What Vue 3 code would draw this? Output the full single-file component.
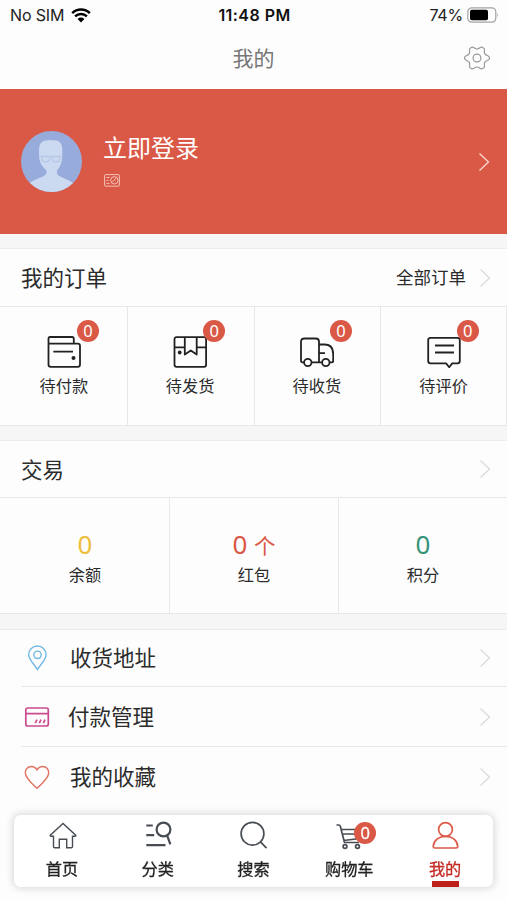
<script setup>
import { ref } from 'vue'

const orders = [
  { id: 'pay', label: '待付款', count: 0 },
  { id: 'ship', label: '待发货', count: 0 },
  { id: 'receive', label: '待收货', count: 0 },
  { id: 'review', label: '待评价', count: 0 },
]

const assets = [
  { label: '余额', value: 0, tone: 'yellow' },
  { label: '红包', value: 0, unit: '个', tone: 'red' },
  { label: '积分', value: 0, tone: 'green' },
]

const links = [
  { id: 'address', label: '收货地址' },
  { id: 'payment', label: '付款管理' },
  { id: 'favorite', label: '我的收藏' },
]

const tabs = [
  { id: 'home', label: '首页' },
  { id: 'category', label: '分类' },
  { id: 'search', label: '搜索' },
  { id: 'cart', label: '购物车', count: 0 },
  { id: 'mine', label: '我的' },
]

const activeTab = ref('mine')
</script>

<template>
  <div class="page">
    <div class="status">
      <div class="status-side">
        <span class="carrier">No SIM</span>
        <svg class="wifi" width="20" height="15" viewBox="0 0 20 15">
          <path d="M1.2 5.2a12.6 12.6 0 0 1 17.6 0M4.1 8.4a8.4 8.4 0 0 1 11.8 0" fill="none" stroke="#000" stroke-width="2.5" />
          <path d="M10 14.5 6.6 11a4.8 4.8 0 0 1 6.8 0z" />
        </svg>
      </div>
      <span class="clock">11:48 PM</span>
      <div class="status-side status-side--right">
        <span class="percent">74%</span>
        <svg width="33" height="16" viewBox="0 0 33 16">
          <rect x="1.8" y=".8" width="28" height="14.4" rx="4" fill="none" stroke="#a2a2a2" stroke-width="1.2" />
          <rect x="4" y="2.8" width="18" height="10.4" rx="1.8" />
          <path d="M31.3 5.5q1.6 2.5 0 5z" fill="#a2a2a2" />
        </svg>
      </div>
    </div>

    <header class="nav">
      <h1>我的</h1>
      <svg class="gear" width="26" height="26" viewBox="0 0 26 26" fill="none" stroke="#999" stroke-width="1.2">
        <path d="M8.300 2.100C9.700 1.600 10.300 4 13 4s3.300-2.400 4.700-1.900l2.500 1.500c1.100 1-.6 2.900.5 5 1.200 2.100 4.300 1.900 4.700 3.700v1.400c-.4 1.800-3.500 1.600-4.700 3.700-1.100 2.100.6 4-.5 5l-2.500 1.500c-1.400.5-2-1.900-4.700-1.900s-3.300 2.400-4.700 1.900l-2.500-1.500c-1.100-1 .6-2.900-.5-5C4.100 15.300 1 15.500.6 13.700v-1.400c.4-1.800 3.500-1.600 4.700-3.700 1.100-2.100-.6-4 .5-5z" />
        <circle cx="13" cy="13" r="3.900" />
      </svg>
    </header>

    <section class="profile">
      <svg class="avatar" width="61" height="61" viewBox="0 0 61 61">
        <defs>
          <clipPath id="avatar-clip"><circle cx="30.5" cy="30.5" r="30.5" /></clipPath>
        </defs>
        <g clip-path="url(#avatar-clip)">
          <rect width="61" height="61" fill="#98acdc" />
          <path d="M18 25V18Q18 9.200 27 9.200h5.500Q41.300 9.200 41.300 18v7c0 6-2 10.500-5.300 14.500v3c3 5 12 5 18 11.500v7H7v-7c5-6.500 15-6.500 18.500-11.500v-3C21.500 36 18 31 18 25z" fill="#ccdaf1" />
          <path d="M18 25.500h23.500M20.500 26q0 5 4.300 5t4.200-5M31 26q0 5 4 5t4.200-5" fill="none" stroke="#b7c7e7" stroke-width="1.3" />
        </g>
      </svg>
      <div class="profile-text">
        <div class="login">立即登录</div>
        <svg class="card-tag" width="16" height="13" viewBox="0 0 16 13" fill="none" stroke="#f6c3b7" stroke-width="1">
          <rect x=".6" y=".6" width="14.800" height="11.600" rx="1.200" />
          <path d="M2.500 3.500h3M2.500 6.400h2M2.500 9.400h3M8.300 8.200l4.200-4.500" />
          <circle cx="10.400" cy="6.300" r="3.700" />
        </svg>
      </div>
      <svg class="chevron chevron--light" width="12" height="20" viewBox="0 0 12 20"><path d="M1.500 1.500 10.500 10 1.500 18.500" /></svg>
    </section>

    <section class="panel">
      <div class="panel-head">
        <h2>我的订单</h2>
        <span class="panel-more">全部订单</span>
        <svg class="chevron" width="12" height="20" viewBox="0 0 12 20"><path d="M1.500 1.500 10.500 10 1.500 18.500" /></svg>
      </div>
      <div class="orders">
        <div v-for="o in orders" :key="o.id" class="order">
          <div class="order-icon">
            <svg width="34" height="34" viewBox="0 0 34 34">
              <g v-if="o.id === 'pay'">
                <path d="M1.500 11V4.500Q1.500 3 3 3h22q1.800 0 1.800 1.800V9.500M1.500 9.700h29.200Q33 9.700 33 12v18.500q0 2.300-2.300 2.300H3.800Q1.500 32.800 1.500 30.500zM6.300 17.600H26" />
                <circle class="dot" cx="26.500" cy="24" r="2" />
              </g>
              <g v-else-if="o.id === 'ship'">
                <path d="M3.500 3.200h27.600q2 0 2 2v25.600q0 2-2 2H3.500q-2 0-2-2V5.200q0-2 2-2zM1.500 13.300h10.300M23.700 13.300H33M11.800 3.200v17.300l6-4 5.900 4V3.200" />
                <circle class="dot" cx="6.700" cy="18.500" r="1.900" />
              </g>
              <g v-else-if="o.id === 'receive'">
                <path d="M4 28.300H2.500q-1.500 0-1.500-1.500V8q0-3.500 3.500-3.500h11.200q3.300 0 3.300 3.300v20.500M11.600 28.300h10.300M19 10.500h5.500q8.700 0 8.700 9.500v6.800q0 1.500-1.500 1.500h-2M19.500 19.200H25" />
                <circle cx="7.800" cy="28.500" r="3.700" />
                <circle cx="25.800" cy="28.500" r="3.700" />
              </g>
              <g v-else>
                <path d="M3.500 3.800h27q2.300 0 2.300 2.300v21q0 2.300-2.300 2.300h-5.300l-3 3.800-3.100-3.800H3.500q-2.300 0-2.300-2.300v-21q0-2.300 2.300-2.300zM8 11.500h19M8 18.500h19" />
              </g>
            </svg>
            <span class="badge">{{ o.count }}</span>
          </div>
          <span class="order-label">{{ o.label }}</span>
        </div>
      </div>
    </section>

    <section class="panel panel--assets">
      <div class="panel-head">
        <h2>交易</h2>
        <svg class="chevron" width="12" height="20" viewBox="0 0 12 20"><path d="M1.500 1.500 10.500 10 1.500 18.500" /></svg>
      </div>
      <div class="assets">
        <div v-for="a in assets" :key="a.label" class="asset">
          <span class="asset-value" :class="`asset-value--${a.tone}`">
            {{ a.value }} <span v-if="a.unit" class="asset-unit">{{ a.unit }}</span>
          </span>
          <span class="asset-label">{{ a.label }}</span>
        </div>
      </div>
    </section>

    <section class="panel panel--list">
      <div v-for="l in links" :key="l.id" class="link" :class="`link--${l.id}`">
        <svg class="link-icon" width="26" height="26" viewBox="0 0 26 26">
          <g v-if="l.id === 'address'">
            <path d="M13.500 24.500C10 19 4.700 14.500 4.700 9.700a8.700 8.700 0 0 1 17.400 0c0 4.800-5.300 9.300-8.600 14.800z" />
            <circle cx="13.500" cy="9.800" r="3.700" />
          </g>
          <g v-else-if="l.id === 'payment'">
            <rect x="1.800" y="4" width="22.500" height="18" rx="2" />
            <path d="M2 9.700h22M11.300 19.200l1.700-3.600M15.300 19.200l1.700-3.600M19.300 19.200l1.700-3.600" />
          </g>
          <g v-else>
            <path d="M13 24.300C9 20.500 1.300 14.500 1.300 8.800 1.300 5 4 2.500 7.200 2.500c2.600 0 4.700 1.500 5.800 3.300 1.100-1.800 3.200-3.300 5.800-3.300 3.200 0 5.900 2.500 5.900 6.300 0 5.700-7.700 11.700-11.700 15.500z" />
          </g>
        </svg>
        <span class="link-label">{{ l.label }}</span>
        <svg class="chevron" width="12" height="20" viewBox="0 0 12 20"><path d="M1.500 1.500 10.500 10 1.500 18.500" /></svg>
      </div>
    </section>

    <nav class="tabbar">
      <div
        v-for="t in tabs"
        :key="t.id"
        class="tab"
        :class="{ 'tab--active': t.id === activeTab }"
        @click="activeTab = t.id"
      >
        <div class="tab-icon">
          <svg width="30" height="30" viewBox="0 0 30 30">
            <g v-if="t.id === 'home'" class="thin">
              <path d="M16 3.500 3.300 15.200q-.5 1 .7 1h2.500v10.300q0 1.200 1.200 1.200h4.600V19.200h7.400v8.500h4.600q1.200 0 1.200-1.200V16.200H28q1.200 0 .7-1z" />
            </g>
            <g v-else-if="t.id === 'category'" class="thick">
              <path d="M3.300 5.500h6.500M3.300 15.200h7.900M3.300 25.200h19.200M24.200 15.700l3.200 8.600" />
              <circle cx="20.500" cy="9.500" r="6.900" />
            </g>
            <g v-else-if="t.id === 'search'">
              <circle cx="14.500" cy="13.700" r="11.400" />
              <path d="M22.500 21.900l6 6.300" />
            </g>
            <g v-else-if="t.id === 'cart'">
              <path d="M2.500 5h2.200q1.300 0 1.700 1.500L10.500 22.500H25M7.500 9.500h20L25.500 18.500 9.700 20.500M9 14h17" />
              <circle cx="11" cy="26.500" r="1.900" />
              <circle cx="23.500" cy="26.500" r="1.900" />
            </g>
            <g v-else>
              <circle cx="15.500" cy="9.500" r="6.900" />
              <path d="M5 28q-1.900 0-1.700-2C4 20 9 16.400 15.500 16.400S27 20 27.700 26q.2 2-1.700 2z" />
            </g>
          </svg>
          <span v-if="t.count !== undefined" class="badge badge--tab">{{ t.count }}</span>
        </div>
        <span class="tab-label">{{ t.label }}</span>
      </div>
    </nav>
  </div>
</template>

<style>
body {
  background: #fdfdfd;
}
</style>

<style scoped>
.page {
  height: 900px;
  overflow: hidden;
  background: #fdfdfd;
  color: #2b2b2b;
  font-family: "Noto Sans", "Noto Sans CJK SC", sans-serif;
}
.status {
  display: grid;
  grid-template-columns: 1fr auto 1fr;
  align-items: center;
  height: 30px;
  padding: 0 8px 0 10px;
  font-family: Inter, sans-serif;
  font-size: 16px;
  line-height: 30px;
  color: #222;
}
.status-side {
  display: flex;
  align-items: center;
  gap: 7px;
}
.status-side--right {
  justify-content: flex-end;
  gap: 3px;
}
.carrier {
  letter-spacing: -0.15px;
}
.percent {
  letter-spacing: -0.2px;
}
.clock {
  font-weight: 600;
  letter-spacing: 0.45px;
  color: #111;
}
.nav {
  display: grid;
  grid-template-columns: 1fr auto 1fr;
  align-items: center;
  height: 59px;
  padding: 0 17px;
  box-sizing: border-box;
}
.nav h1 {
  grid-column: 2;
  margin: 0 0 3px;
  font-size: 21px;
  font-weight: 400;
  line-height: 30px;
  color: #777;
}
.gear {
  justify-self: end;
  margin-bottom: 3px;
}
.profile {
  display: flex;
  align-items: center;
  height: 145px;
  padding: 0 17px 0 21px;
  background: #da5846;
}
.profile-text {
  flex: 1;
  padding: 0 0 6px 21px;
}
.login {
  font-size: 24px;
  line-height: 34px;
  color: #fff;
}
.card-tag {
  display: block;
  margin: 9px 0 0 1px;
}
.chevron {
  flex: none;
  fill: none;
  stroke: #dcdcdc;
  stroke-width: 1.4;
}
.chevron--light {
  stroke: #f9d5cd;
}
.panel {
  margin-top: 14px;
  border-top: 1px solid #ececec;
  border-bottom: 1px solid #e8e8e8;
  background: #fdfdfd;
  box-shadow: 0 -14px #f6f6f6;
}
.panel-head {
  display: flex;
  align-items: center;
  height: 57px;
  padding: 0 16px 0 21px;
  border-bottom: 1px solid #e8e8e8;
}
.panel-head h2 {
  flex: 1;
  margin: 0;
  padding-bottom: 2px;
  font-size: 21.5px;
  font-weight: 400;
}
.panel-more {
  margin-right: 13px;
  padding-bottom: 2px;
  font-size: 17.5px;
}
.panel--assets .panel-head {
  height: 56px;
}
.orders {
  display: grid;
  grid-template-columns: repeat(4, 1fr);
}
.order {
  display: flex;
  flex-direction: column;
  align-items: center;
  height: 118px;
  padding-top: 27px;
  box-sizing: border-box;
  box-shadow: 1px 0 #e8e8e8;
}
.order:first-child {
  padding-left: 1px;
}
.order:last-child {
  box-shadow: inset -1px 0 #e8e8e8;
}
.order-icon {
  position: relative;
  height: 34px;
}
.order-icon svg {
  display: block;
  fill: none;
  stroke: #222;
  stroke-width: 1.8;
  stroke-linejoin: round;
}
.order-icon .dot {
  fill: #222;
  stroke: none;
}
.badge {
  position: absolute;
  top: -14px;
  left: 30px;
  width: 22px;
  height: 22px;
  border-radius: 50%;
  background: #da5846;
  color: #fff;
  font-size: 16.5px;
  line-height: 22px;
  text-align: center;
}
.order-label {
  margin-top: 6px;
  font-size: 16.2px;
  line-height: 24px;
}
.assets {
  display: grid;
  grid-template-columns: repeat(3, 1fr);
}
.asset {
  display: flex;
  flex-direction: column;
  align-items: center;
  height: 115px;
  padding-top: 29px;
  padding-left: 1px;
  box-sizing: border-box;
}
.asset + .asset {
  padding-left: 0;
  border-left: 1px solid #e8e8e8;
}
.asset-value {
  font-size: 26px;
  line-height: 34px;
}
.asset-unit {
  font-size: 21.5px;
  line-height: 1;
}
.asset-value--yellow { color: #efbd3c; }
.asset-value--green { color: #359479; }
.asset-value--red { color: #da5846; }
.asset-label {
  margin-top: 2px;
  font-size: 16.2px;
  line-height: 24px;
}
.panel--list {
  margin-top: 15px;
  border-bottom: 0;
  box-shadow: 0 -15px #f6f6f6;
}
.link {
  display: flex;
  align-items: center;
  height: 59px;
  margin-left: 21px;
  padding-right: 16px;
  border-bottom: 1px solid #e8e8e8;
}
.link:first-child {
  height: 56px;
}
.link:last-child {
  border-bottom: 0;
}
.link-icon {
  margin-left: 3px;
  margin-right: 20px;
  fill: none;
  stroke-width: 1.4;
}
.link--address .link-icon { stroke: #71b9e4; }
.link--payment .link-icon {
  margin-right: 18px;
  stroke: #c94a8e;
  stroke-width: 1.7;
}
.link--favorite .link-icon { stroke: #e07262; }
.link-label {
  flex: 1;
  padding-bottom: 3px;
  font-size: 21.5px;
}
.tabbar {
  position: fixed;
  left: 14px;
  right: 14px;
  bottom: 13px;
  display: grid;
  grid-template-columns: repeat(5, 1fr);
  height: 72px;
  border-radius: 7px;
  background: #fff;
  box-shadow: 0 0 7px 2px rgba(0, 0, 0, 0.13);
}
.tab {
  position: relative;
  display: flex;
  flex-direction: column;
  align-items: center;
  padding-top: 5px;
}
.tab-icon {
  position: relative;
  height: 30px;
}
.tab-icon svg {
  display: block;
  fill: none;
  stroke: #484c53;
  stroke-width: 1.7;
}
.tab-icon .thin { stroke-width: 1.4; }
.tab-icon .thick { stroke-width: 2.2; }
.badge--tab {
  top: 2px;
  left: 20px;
  -webkit-text-stroke: 0.3px currentColor;
}
.tab-label {
  margin-top: 7px;
  font-size: 16.2px;
  line-height: 24px;
  color: #222;
  -webkit-text-stroke: 0.3px currentColor;
}
.tab--active .tab-icon svg { stroke: #dc5a48; }
.tab--active .tab-label { color: #c22a22; }
.tab--active::after {
  content: "";
  position: absolute;
  bottom: 0;
  width: 27px;
  height: 6px;
  background: #bd2119;
}
</style>
